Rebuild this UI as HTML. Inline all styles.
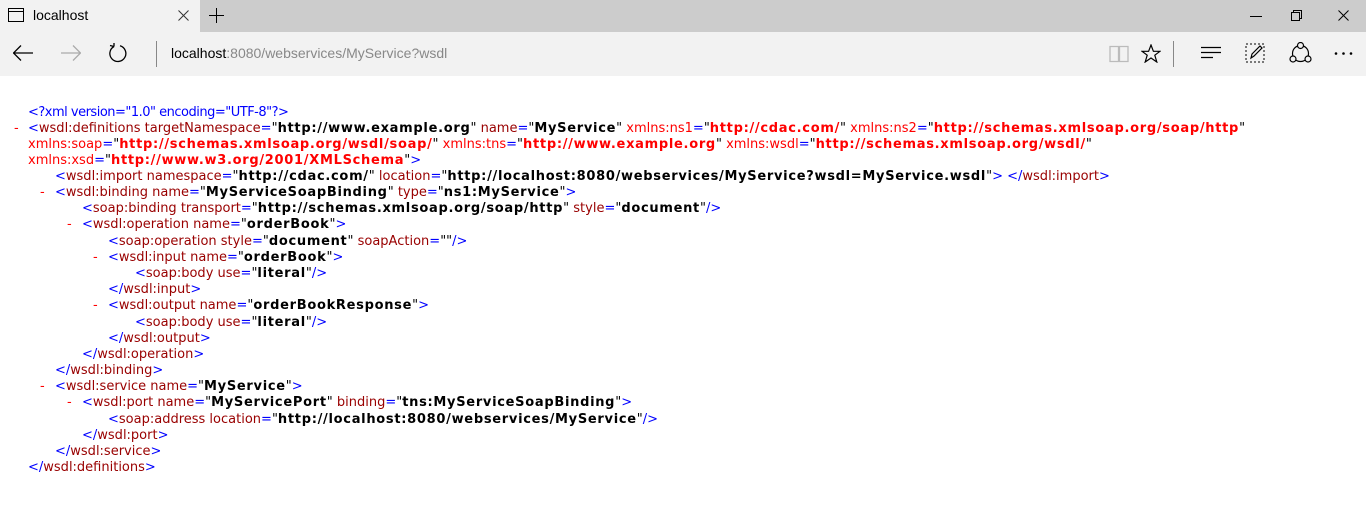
<!DOCTYPE html>
<html><head><meta charset="utf-8"><style>
*{margin:0;padding:0;box-sizing:border-box}
body{width:1366px;height:517px;background:#fff;position:relative;overflow:hidden;font-family:"Liberation Sans",sans-serif}
#tabs{position:absolute;left:0;top:0;width:1366px;height:32px;background:#cccccc}
#tab{position:absolute;left:0;top:0;width:200px;height:32px;background:#f2f2f2}
#bar{position:absolute;left:0;top:32px;width:1366px;height:44px;background:#f2f2f2}
.t{position:absolute;font-size:14px;color:#000}
#x{position:absolute;left:0;top:1px;width:1366px;height:500px;font-family:"DejaVu Sans",sans-serif;font-size:13px}
.l{position:absolute;white-space:pre;line-height:16px}
.b{color:#0000ff}.n{color:#990000}.v{font-weight:bold;color:#000;letter-spacing:0.7px}.r{color:#ff0000}.rv{color:#ff0000;font-weight:bold;letter-spacing:0.7px}.d{color:#ff0000}
</style></head><body>
<div id="tabs"><div id="tab"></div></div>
<svg style="position:absolute;left:8px;top:8px" width="16" height="14"><rect x="0.5" y="0.5" width="15" height="13" fill="none" stroke="#000"/><line x1="0" y1="3.5" x2="16" y2="3.5" stroke="#000"/></svg>
<div class="t" style="left:33px;top:7px">localhost</div>
<svg style="position:absolute;left:178px;top:10px" width="11" height="11"><path d="M0.5 0.5L10.5 10.5M10.5 0.5L0.5 10.5" stroke="#333"/></svg>
<svg style="position:absolute;left:209px;top:8px" width="15" height="15"><path d="M7.5 0V15M0 7.5H15" stroke="#000"/></svg>
<svg style="position:absolute;left:1250px;top:16px" width="12" height="2"><path d="M0 0.5H12" stroke="#000"/></svg>
<svg style="position:absolute;left:1291px;top:10px" width="11" height="11"><path d="M0.5 2.5H8.5V10.5H0.5ZM2.5 2.5V0.5H10.5V8.5H8.5" fill="none" stroke="#000"/></svg>
<svg style="position:absolute;left:1338px;top:10px" width="11" height="11"><path d="M0.5 0.5L10.5 10.5M10.5 0.5L0.5 10.5" stroke="#000"/></svg>
<div id="bar"></div>
<svg style="position:absolute;left:13px;top:45px" width="20" height="16"><path d="M0.5 8H20M8 0.5L0.5 8L8 15.5" fill="none" stroke="#000" stroke-width="1.3"/></svg>
<svg style="position:absolute;left:61px;top:45px" width="20" height="16"><path d="M0 8H19.5M12 0.5L19.5 8L12 15.5" fill="none" stroke="#aaa" stroke-width="1.3"/></svg>
<svg style="position:absolute;left:108px;top:43px" width="20" height="20"><path d="M6 3.5A8 8 0 1 0 12 2.8M6 3.5L6 -1M6 3.5L2 2.5" fill="none" stroke="#000" stroke-width="1.3"/></svg>
<div style="position:absolute;left:156px;top:41px;width:1px;height:26px;background:#888"></div>
<div class="t" style="left:171px;top:45px;font-size:14px">localhost<span style="color:#888">:8080/webservices/MyService?wsdl</span></div>
<svg style="position:absolute;left:1109px;top:45px" width="20" height="18"><path d="M1 1.5H9.5V16.5H1ZM10.5 1.5H19V16.5H10.5Z" fill="none" stroke="#bbb" stroke-width="1.3"/></svg>
<svg style="position:absolute;left:1141px;top:44px" width="20" height="19"><path d="M10 1L12.4 7.3H19L13.8 11.2L15.8 18L10 14L4.2 18L6.2 11.2L1 7.3H7.6Z" fill="none" stroke="#000" stroke-width="1.2"/></svg>
<div style="position:absolute;left:1173px;top:41px;width:1px;height:26px;background:#888"></div>
<svg style="position:absolute;left:1201px;top:46px" width="21" height="14"><path d="M0 1.5H20M0 6.5H20M0 11.5H12" stroke="#000" stroke-width="1.2"/></svg>
<svg style="position:absolute;left:1245px;top:43px" width="21" height="21"><rect x="1" y="1" width="18" height="18" fill="none" stroke="#000" stroke-dasharray="2 2"/><path d="M6 15L7 11L15 3L17 5L9 13Z" fill="none" stroke="#000" stroke-width="1.2"/></svg>
<svg style="position:absolute;left:1289px;top:42px" width="23" height="22"><circle cx="11.5" cy="11.5" r="8" fill="none" stroke="#000" stroke-width="1.2"/><circle cx="11.5" cy="3.5" r="3" fill="#f2f2f2" stroke="#000" stroke-width="1.2"/><circle cx="4" cy="17" r="3" fill="#f2f2f2" stroke="#000" stroke-width="1.2"/><circle cx="19" cy="17" r="3" fill="#f2f2f2" stroke="#000" stroke-width="1.2"/></svg>
<svg style="position:absolute;left:1334px;top:52px" width="20" height="3"><circle cx="2" cy="1.5" r="1.3"/><circle cx="9.5" cy="1.5" r="1.3"/><circle cx="17" cy="1.5" r="1.3"/></svg>

<div id="x">
<div class="l" style="left:28px;top:104px;letter-spacing:-0.5px"><span class="b">&lt;?</span><span class="b">xml version="1.0" encoding="UTF-8"</span><span class="b">?&gt;</span></div>
<div class="l" style="left:14px;top:120px"><span class="d">-</span></div>
<div class="l" style="left:28px;top:120px"><span class="b">&lt;</span><span class="n">wsdl:definitions targetNamespace</span><span class="b">=</span>"<span class="v">http://www.example.org</span>" <span class="n">name</span><span class="b">=</span>"<span class="v">MyService</span>" <span class="r">xmlns:ns1</span><span class="b">=</span>"<span class="rv">http://cdac.com/</span>" <span class="r">xmlns:ns2</span><span class="b">=</span>"<span class="rv">http://schemas.xmlsoap.org/soap/http</span>"</div>
<div class="l" style="left:28px;top:136px"><span class="r">xmlns:soap</span><span class="b">=</span>"<span class="rv">http://schemas.xmlsoap.org/wsdl/soap/</span>" <span class="r">xmlns:tns</span><span class="b">=</span>"<span class="rv">http://www.example.org</span>" <span class="r">xmlns:wsdl</span><span class="b">=</span>"<span class="rv">http://schemas.xmlsoap.org/wsdl/</span>"</div>
<div class="l" style="left:28px;top:152px"><span class="r">xmlns:xsd</span><span class="b">=</span>"<span class="rv">http://www.w3.org/2001/XMLSchema</span>"<span class="b">&gt;</span></div>
<div class="l" style="left:55px;top:168px"><span class="b">&lt;</span><span class="n">wsdl:import namespace</span><span class="b">=</span>"<span class="v">http://cdac.com/</span>" <span class="n">location</span><span class="b">=</span>"<span class="v">http://localhost:8080/webservices/MyService?wsdl=MyService.wsdl</span>"<span class="b">&gt;</span> <span class="b">&lt;/</span><span class="n">wsdl:import</span><span class="b">&gt;</span></div>
<div class="l" style="left:40px;top:184px"><span class="d">-</span></div>
<div class="l" style="left:55px;top:184px"><span class="b">&lt;</span><span class="n">wsdl:binding name</span><span class="b">=</span>"<span class="v">MyServiceSoapBinding</span>" <span class="n">type</span><span class="b">=</span>"<span class="v">ns1:MyService</span>"<span class="b">&gt;</span></div>
<div class="l" style="left:82px;top:200px"><span class="b">&lt;</span><span class="n">soap:binding transport</span><span class="b">=</span>"<span class="v">http://schemas.xmlsoap.org/soap/http</span>" <span class="n">style</span><span class="b">=</span>"<span class="v">document</span>"<span class="b">/&gt;</span></div>
<div class="l" style="left:67px;top:216px"><span class="d">-</span></div>
<div class="l" style="left:82px;top:216px"><span class="b">&lt;</span><span class="n">wsdl:operation name</span><span class="b">=</span>"<span class="v">orderBook</span>"<span class="b">&gt;</span></div>
<div class="l" style="left:108px;top:233px"><span class="b">&lt;</span><span class="n">soap:operation style</span><span class="b">=</span>"<span class="v">document</span>" <span class="n">soapAction</span><span class="b">=</span>""<span class="b">/&gt;</span></div>
<div class="l" style="left:93px;top:249px"><span class="d">-</span></div>
<div class="l" style="left:108px;top:249px"><span class="b">&lt;</span><span class="n">wsdl:input name</span><span class="b">=</span>"<span class="v">orderBook</span>"<span class="b">&gt;</span></div>
<div class="l" style="left:135px;top:265px"><span class="b">&lt;</span><span class="n">soap:body use</span><span class="b">=</span>"<span class="v">literal</span>"<span class="b">/&gt;</span></div>
<div class="l" style="left:108px;top:281px"><span class="b">&lt;/</span><span class="n">wsdl:input</span><span class="b">&gt;</span></div>
<div class="l" style="left:93px;top:297px"><span class="d">-</span></div>
<div class="l" style="left:108px;top:297px"><span class="b">&lt;</span><span class="n">wsdl:output name</span><span class="b">=</span>"<span class="v">orderBookResponse</span>"<span class="b">&gt;</span></div>
<div class="l" style="left:135px;top:314px"><span class="b">&lt;</span><span class="n">soap:body use</span><span class="b">=</span>"<span class="v">literal</span>"<span class="b">/&gt;</span></div>
<div class="l" style="left:108px;top:330px"><span class="b">&lt;/</span><span class="n">wsdl:output</span><span class="b">&gt;</span></div>
<div class="l" style="left:82px;top:346px"><span class="b">&lt;/</span><span class="n">wsdl:operation</span><span class="b">&gt;</span></div>
<div class="l" style="left:55px;top:362px"><span class="b">&lt;/</span><span class="n">wsdl:binding</span><span class="b">&gt;</span></div>
<div class="l" style="left:40px;top:378px"><span class="d">-</span></div>
<div class="l" style="left:55px;top:378px"><span class="b">&lt;</span><span class="n">wsdl:service name</span><span class="b">=</span>"<span class="v">MyService</span>"<span class="b">&gt;</span></div>
<div class="l" style="left:67px;top:394px"><span class="d">-</span></div>
<div class="l" style="left:82px;top:394px"><span class="b">&lt;</span><span class="n">wsdl:port name</span><span class="b">=</span>"<span class="v">MyServicePort</span>" <span class="n">binding</span><span class="b">=</span>"<span class="v">tns:MyServiceSoapBinding</span>"<span class="b">&gt;</span></div>
<div class="l" style="left:108px;top:411px"><span class="b">&lt;</span><span class="n">soap:address location</span><span class="b">=</span>"<span class="v">http://localhost:8080/webservices/MyService</span>"<span class="b">/&gt;</span></div>
<div class="l" style="left:82px;top:427px"><span class="b">&lt;/</span><span class="n">wsdl:port</span><span class="b">&gt;</span></div>
<div class="l" style="left:55px;top:443px"><span class="b">&lt;/</span><span class="n">wsdl:service</span><span class="b">&gt;</span></div>
<div class="l" style="left:28px;top:459px"><span class="b">&lt;/</span><span class="n">wsdl:definitions</span><span class="b">&gt;</span></div>
</div>
</body></html>
